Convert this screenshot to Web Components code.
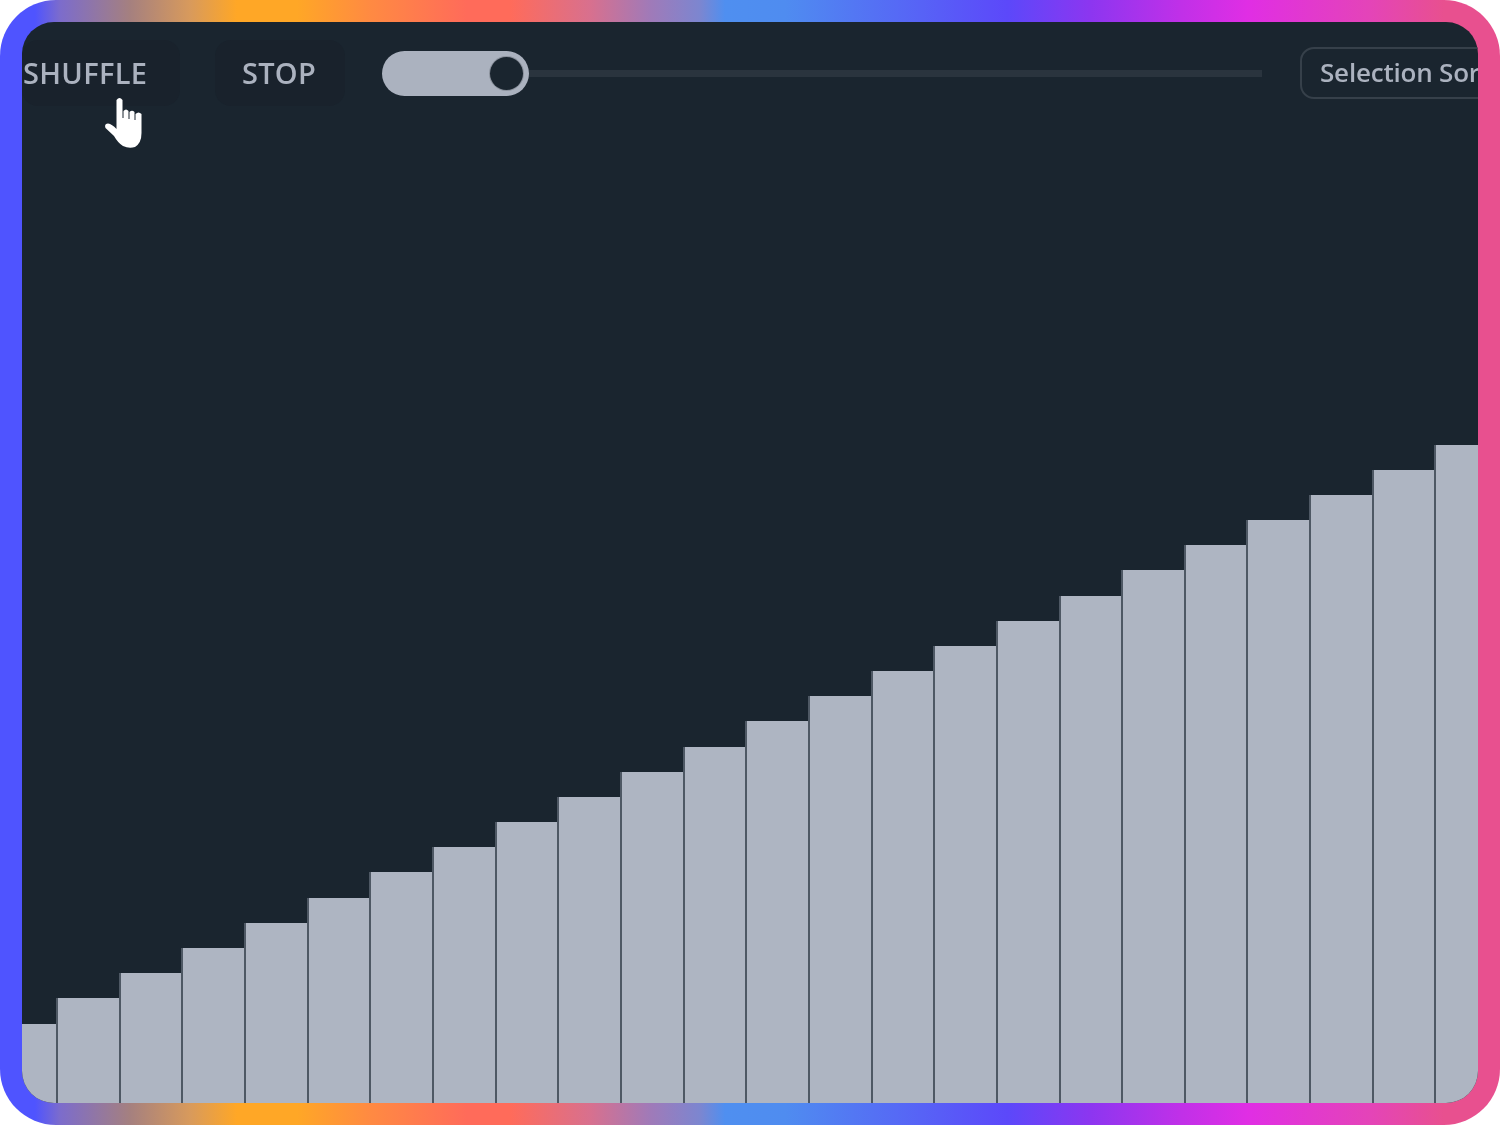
<!DOCTYPE html>
<html><head><meta charset="utf-8"><style>html,body{margin:0;background:#fff}</style></head><body>
<template id="t-frame"><style>
:host{display:block;width:1500px;height:1125px;box-sizing:border-box;padding:22px;border-radius:56px;background:linear-gradient(90deg,#4f54ff 0,#4f54ff 35px,#7c6ccc 60px,#a5807f 130px,#d89a5c 190px,#ffa726 237px,#ffa726 297px,#ff8a42 370px,#ff6b5a 467px,#ff6b5a 510px,#d8708e 590px,#a07ab8 650px,#7c86d0 700px,#4f8ff0 725px,#4f8cf0 785px,#5c48fa 1008px,#8c36f0 1090px,#c030e8 1180px,#e02ee4 1248px,#e444b8 1370px,#e8508f 1444px)}
.in{height:100%;border-radius:32px;overflow:hidden;background:#1a252f;position:relative;display:flex;flex-direction:column}
</style><div class="in"><slot></slot></div></template>
<template id="t-bar"><style>
:host{display:flex;align-items:center;flex:none;height:102px;box-sizing:border-box;color:#abb2bf;font:600 29px/1 "Open Sans",sans-serif}
</style><slot></slot></template>
<template id="t-btn"><style>
:host{display:flex;align-items:center;justify-content:center;flex:none;height:66px;border-radius:16px;background:#19222c;box-sizing:border-box;letter-spacing:.3px;white-space:nowrap;filter:blur(.6px);padding-bottom:2px}
</style><slot></slot></template>
<template id="t-slider"><style>
:host{display:block;flex:none;width:880px;height:46px;position:relative;margin-left:37px;top:1px}
.track{position:absolute;left:100px;right:0;top:19px;height:7px;background:#2a343e;filter:blur(.6px)}
.fill{position:absolute;left:0;top:0;width:147px;height:45px;border-radius:23px;background:#abb2bf;filter:blur(.6px)}
.thumb{position:absolute;left:108px;top:6px;width:33px;height:33px;border-radius:50%;background:#1a252f;box-shadow:0 0 0 1px #8b929d;filter:blur(.4px)}
</style><div class="track"></div><div class="fill"></div><div class="thumb"></div></template>
<template id="t-select"><style>
:host{display:flex;align-items:center;flex:none;width:240px;height:52px;margin-left:38px;padding-left:18px;padding-bottom:2px;box-sizing:border-box;border:2px solid #36404a;border-radius:14px;font-size:26px;font-weight:600;letter-spacing:-.2px;white-space:nowrap;filter:blur(.6px)}
</style><slot></slot></template>
<template id="t-bars"><style>
:host{flex:1;display:flex;align-items:flex-end;min-height:0}
div{flex:none;box-sizing:border-box;width:62.67px;background:#aeb5c2;border-left:2px solid #4e5864}
div:first-of-type{width:34px;border-left:0}
</style></template>
<template id="t-cursor"><style>
:host{display:block;position:absolute;left:83px;top:75px;width:38px;height:52px}
svg{display:block;overflow:visible;filter:blur(.4px)}
</style><svg width="38" height="52" viewBox="0 0 38 52"><path d="M11.5 3Q14.500-1 17.500 3L17.500 21 18.500 21 18.500 14Q21 11 23.500 14L23.500 22 24.500 22 24.500 15Q27 12.500 29.500 15L29.500 23 30.500 23 30.500 17Q33.500 14 36.500 17L36.500 36Q36.500 46 30 50 24 52 18 49 13 46 9 39L.5 31Q-1 27 3 26.500 7 27 11.500 32Z" fill="#fff"/></svg></template>

<sort-frame>
 <sort-toolbar>
  <sort-button style="width:158px;justify-content:flex-start;padding-left:1px">SHUFFLE</sort-button>
  <sort-button style="width:130px;margin-left:35px;padding-right:2px">STOP</sort-button>
  <sort-slider></sort-slider>
  <sort-select>Selection Sort</sort-select>
 </sort-toolbar>
 <sort-bars></sort-bars>
 <sort-cursor></sort-cursor>
</sort-frame>
<script>
function reg(name,tid,after){customElements.define(name,class extends HTMLElement{constructor(){super();const s=this.attachShadow({mode:'open'});s.appendChild(document.getElementById(tid).content.cloneNode(true));if(after)after(s)}})}
reg('sort-frame','t-frame');reg('sort-toolbar','t-bar');reg('sort-button','t-btn');reg('sort-slider','t-slider');reg('sort-select','t-select');reg('sort-cursor','t-cursor');
reg('sort-bars','t-bars',s=>{for(let i=0;i<24;i++){const d=document.createElement('div');d.style.height=(79.5+i*25.17)+'px';s.appendChild(d)}});
</script>
</body></html>
